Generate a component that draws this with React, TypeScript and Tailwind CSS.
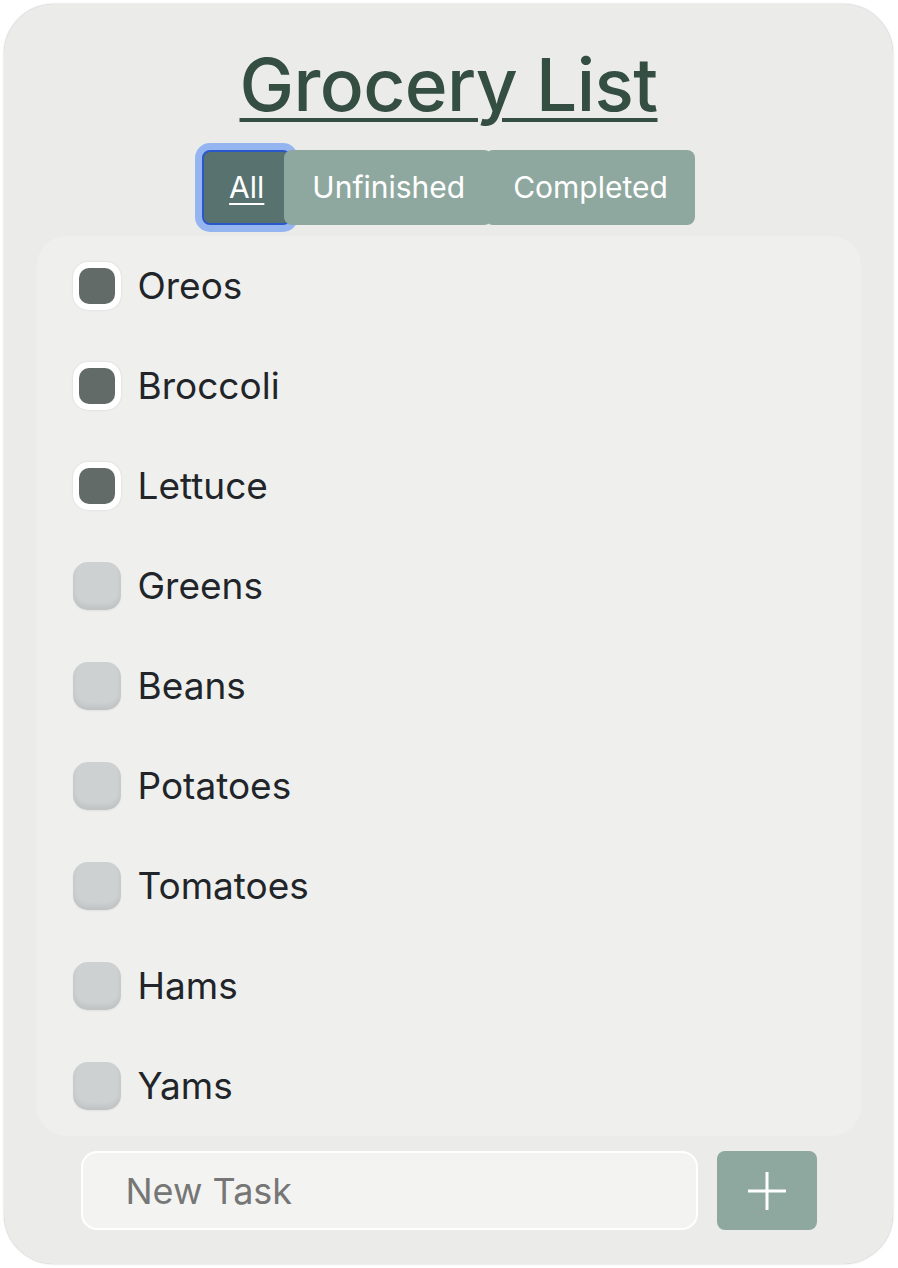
import { useState } from 'react';

const ITEMS = [
  { name: 'Oreos', done: true },
  { name: 'Broccoli', done: true },
  { name: 'Lettuce', done: true },
  { name: 'Greens', done: false },
  { name: 'Beans', done: false },
  { name: 'Potatoes', done: false },
  { name: 'Tomatoes', done: false },
  { name: 'Hams', done: false },
  { name: 'Yams', done: false },
];

const App = () => {
  const [items, setItems] = useState(ITEMS);
  const [filter, setFilter] = useState('All');
  const [text, setText] = useState('');

  const toggle = (i: number) =>
    setItems(items.map((it, j) => (j === i ? { ...it, done: !it.done } : it)));

  const visible = items.filter((it) =>
    filter === 'All' ? true : filter === 'Completed' ? it.done : !it.done
  );

  const addItem = () => {
    if (!text.trim()) return;
    setItems([...items, { name: text.trim(), done: false }]);
    setText('');
  };

  return (
    <div className="bg-white p-1 w-[898px] h-[1268px]" style={{ fontFamily: 'Inter, "Noto Sans", sans-serif' }}>
      <div className="w-[889px] h-[1260px] bg-[#ebecea] rounded-[50px] shadow-[0_0_1.5px_rgba(60,80,70,0.45)] flex flex-col items-center">
        <h1 className="mt-[37px] text-[73px] leading-[88px] font-medium text-[#344e41] underline decoration-[4px] underline-offset-[7px] tracking-[-0.6px]">
          Grocery List
        </h1>

        <div className="mt-[21px] flex">
          {['All', 'Unfinished', 'Completed'].map((f, i) => (
            <button
              key={f}
              onClick={() => setFilter(f)}
              className={`h-[75px] text-[30px] text-white rounded-lg ${
                filter === f
                  ? 'relative z-0 bg-[#58736f] border-2 border-[#2a57c9] ring-[7px] ring-[#94b5ef] px-[25px] underline underline-offset-[5px] decoration-[2px]'
                  : 'relative z-10 bg-[#8fa89f] pl-[28px] pr-[27px]'
              } ${i > 0 ? '-ml-[7px]' : ''}`}
            >
              {f}
            </button>
          ))}
        </div>

        <div className="mt-[11px] w-[824px] bg-[#eff0ee] rounded-[30px] flex flex-col">
          {visible.map((it) => {
            const idx = items.indexOf(it);
            return (
              <label key={it.name} className="h-[100px] flex items-center pl-[36px] cursor-pointer">
                <span
                  onClick={() => toggle(idx)}
                  className={`w-[48px] h-[48px] rounded-[15px] flex items-center justify-center ${
                    it.done
                      ? 'bg-white shadow-[0_0_2px_rgba(0,0,0,0.15)]'
                      : 'bg-[#ced1d2] shadow-[inset_0_-4px_5px_rgba(0,0,0,0.07),0_1px_2px_rgba(0,0,0,0.06)]'
                  }`}
                >
                  {it.done && <span className="w-[36px] h-[36px] rounded-[10px] bg-[#636b69]" />}
                </span>
                <span className="ml-[17px] text-[37px] text-[#212529]">{it.name}</span>
              </label>
            );
          })}
        </div>

        <div className="mt-[15px] flex gap-[19px]">
          <input
            value={text}
            onChange={(e) => setText(e.target.value)}
            placeholder="New Task"
            className="w-[617px] h-[79px] rounded-[16px] border-2 border-white bg-[#f3f4f2] pl-[43px] text-[36px] text-[#212529] placeholder:text-[#767676] outline-none"
          />
          <button onClick={addItem} className="w-[100px] h-[79px] rounded-lg bg-[#8fa89f] flex items-center justify-center">
            <svg width="40" height="40" viewBox="0 0 40 40" stroke="white" strokeWidth="3">
              <path d="M20 1v38M1 20h38" />
            </svg>
          </button>
        </div>
      </div>
    </div>
  );
};

export default App;
